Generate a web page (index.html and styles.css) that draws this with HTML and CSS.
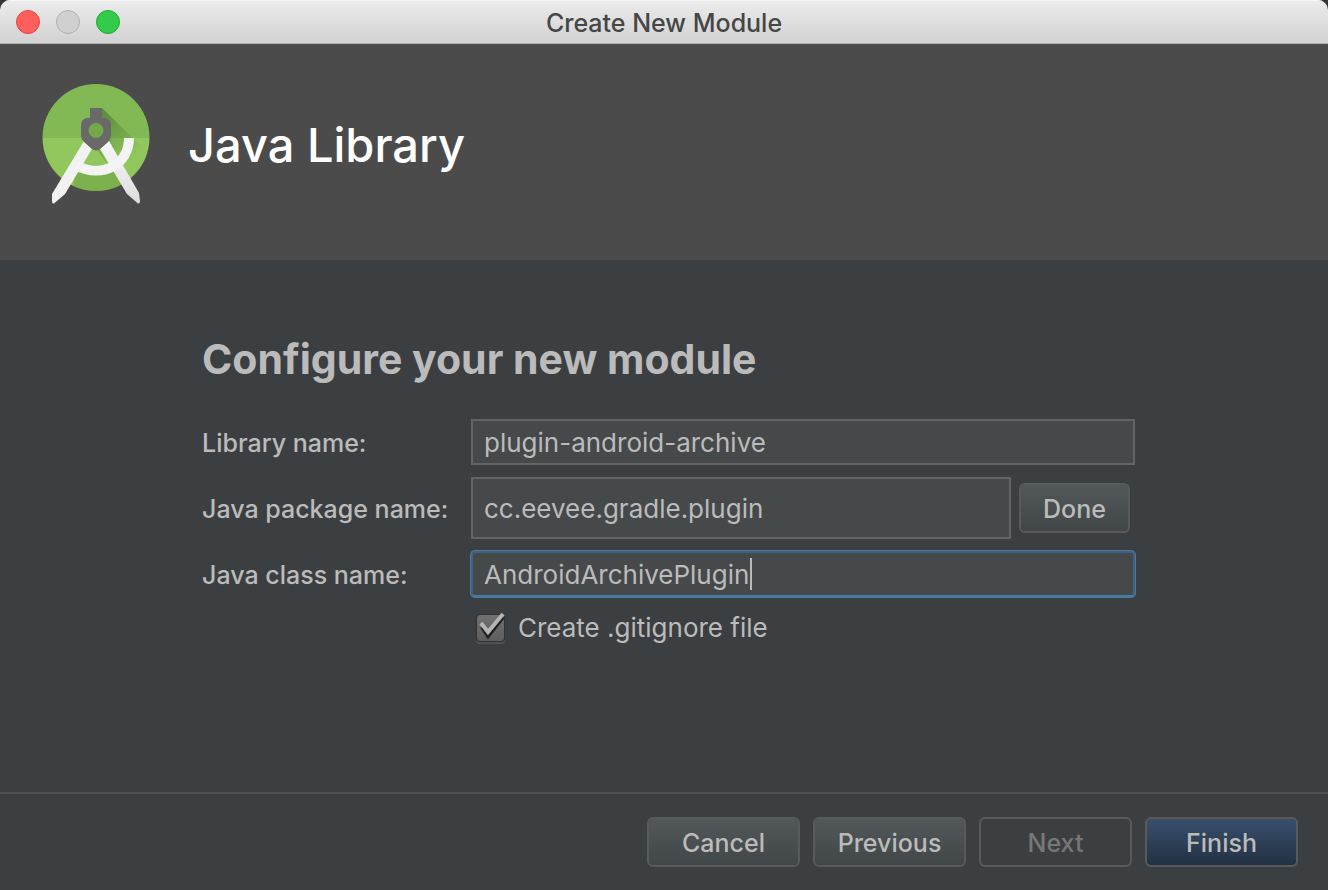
FILE: index.html
```html
<!DOCTYPE html>
<html lang="en">
<head>
<meta charset="utf-8">
<title>Create New Module</title>
<link rel="stylesheet" href="styles.css">
</head>
<body>
<div class="window">
  <header class="titlebar">
    <div class="lights">
      <button class="light close" type="button" aria-label="Close"></button>
      <button class="light minimize" type="button" aria-label="Minimize" disabled></button>
      <button class="light zoom" type="button" aria-label="Zoom"></button>
    </div>
    <div class="title">Create New Module</div>
  </header>

  <section class="banner">
    <svg class="logo" viewBox="0 0 140 150" aria-hidden="true">
      <defs>
        <clipPath id="disc"><circle cx="66" cy="67.500" r="53.500"/></clipPath>
        <linearGradient id="shade" gradientUnits="userSpaceOnUse" x1="72" y1="48" x2="108" y2="84">
          <stop offset="0" stop-color="#507c31" stop-opacity=".7"/>
          <stop offset="1" stop-color="#5d8f38" stop-opacity="0"/>
        </linearGradient>
        <linearGradient id="leg" x1="0" y1="0" x2="0" y2="1">
          <stop offset="0" stop-color="#f7f7f7"/>
          <stop offset="1" stop-color="#dedede"/>
        </linearGradient>
      </defs>
      <g clip-path="url(#disc)">
        <rect x="12" y="13" width="108" height="55" fill="#82b954"/>
        <rect x="12" y="68" width="108" height="54" fill="#92c75d"/>
        <path d="M72 38L126 91V128H100L66 78Z" fill="url(#shade)"/>
        <path d="M49 92Q66 98 86 94L103 122H42L46 100Z" fill="#5f9139" opacity=".4"/>
      </g>
      <path d="M54 71L62 79 35 124 24 133.500Q22 134 22 131V124Z" fill="#f2f2f2"/>
      <path d="M70 79L79 71 109 123 110 131Q110 134 108 133.500L97 124Z" fill="url(#leg)"/>
      <path d="M46 95.500C73 109 99 94 99 68" fill="none" stroke="#f4f4f4" stroke-width="10"/>
      <circle cx="66" cy="60.500" r="9" fill="#75a84b"/>
      <path fill="#696969" fill-rule="evenodd" d="M60 38H72V48H75Q81 49 81 55V65Q81 69 78 72L70 79Q66 82 62 79L54 72Q51 69 51 65V55Q51 49 57 48H60ZM66 53A7.500 7.500 0 1 0 66 68A7.500 7.500 0 1 0 66 53Z"/>
    </svg>
    <h1 class="banner-title">Java Library</h1>
  </section>

  <main class="content">
    <h2 class="heading">Configure your new module</h2>
    <form class="form" id="module-form">
      <label for="library">Library name:</label>
      <input class="field" id="library" type="text" value="plugin-android-archive">

      <label for="package">Java package name:</label>
      <div class="package">
        <input class="field tall" id="package" type="text" value="cc.eevee.gradle.plugin">
        <button class="button done" type="button">Done</button>
      </div>

      <label for="class">Java class name:</label>
      <div class="editing">
        <input class="field active" id="class" type="text" value="AndroidArchivePlugin">
        <span class="caret"></span>
      </div>

      <label class="check">
        <span class="box">
          <input type="checkbox" checked>
          <svg class="tick" viewBox="0 0 36 36" aria-hidden="true">
            <path d="M10 17L16 26 31 7" fill="none" stroke="#202020" stroke-width="4"/>
            <path d="M9 13L16 22 31 4" fill="none" stroke="#b5b5b5" stroke-width="4"/>
          </svg>
        </span>
        Create .gitignore file
      </label>
    </form>
  </main>

  <footer class="actions">
    <button class="button" type="button">Cancel</button>
    <button class="button" type="button">Previous</button>
    <button class="button" type="button" disabled>Next</button>
    <button class="button primary" type="submit" form="module-form">Finish</button>
  </footer>
</div>
</body>
</html>
```
FILE: styles.css
```css
* { box-sizing: border-box; }

body {
  margin: 0;
  background: #393432;
  color: #bbbbbb;
  font: 500 25px/32px Inter, "Liberation Sans", sans-serif;
}

.window {
  display: flex;
  flex-direction: column;
  min-height: 100vh;
  overflow: hidden;
  border-radius: 10px 10px 0 0;
  background: #3c3f41;
}

.titlebar {
  display: grid;
  grid-template-columns: 1fr auto 1fr;
  align-items: center;
  height: 44px;
  padding: 1px 16px 0;
  border-bottom: 1px solid #b0b0b0;
  background: linear-gradient(#ececec, #d2d2d2);
  box-shadow: inset 0 1px #f6f6f6;
  color: #464646;
}

.title { padding-top: 2px; font-weight: 500; }

.lights { display: flex; gap: 16px; }

.light {
  width: 24px;
  height: 24px;
  padding: 0;
  border: 1px solid;
  border-radius: 50%;
}

.close { background: #ff605b; border-color: #e2453f; }
.minimize { background: #d0d0d0; border-color: #b0b0b0; }
.zoom { background: #33cb49; border-color: #1dac2e; }

.banner {
  display: flex;
  align-items: center;
  gap: 18px;
  height: 216px;
  padding: 0 30px 14px;
  background: #4b4b4b;
  color: #ffffff;
}

.logo { width: 140px; height: 150px; }

.banner-title {
  margin: 0;
  font-size: 47px;
  font-weight: 500;
  line-height: 56px;
}

.content { flex: 1; padding: 75px 193px 0 202px; }

.heading {
  margin: 0 0 36px;
  font-size: 41px;
  font-weight: 700;
  line-height: 48px;
}

.form {
  display: grid;
  grid-template-columns: 269px 1fr;
  align-items: center;
  row-gap: 12px;
}

.form > label { padding-top: 2px; }

.field {
  width: 100%;
  min-width: 0;
  height: 46px;
  padding: 0 11px;
  border: 2px solid #646464;
  outline: none;
  background: #45494a;
  color: #bbbbbb;
  font: inherit;
  font-size: 26px;
  font-weight: 400;
}

.tall { height: 62px; }

.active {
  display: block;
  border: 2px solid #43607c;
  border-bottom-color: #4a78a5;
  border-radius: 4px;
  box-shadow: 0 0 0 1px #4a78a5;
}

.editing { position: relative; }

.caret {
  position: absolute;
  top: 7px;
  left: 279px;
  width: 2px;
  height: 32px;
  background: #bbbbbb;
}

.package { display: flex; align-items: center; gap: 8px; padding-right: 5px; }

.button {
  width: 153px;
  height: 50px;
  padding: 2px 0 0;
  border: 2px solid #585a5b;
  border-radius: 6px;
  background: linear-gradient(#525759, #414648) padding-box;
  color: #bbbbbb;
  font: inherit;
}

.button:disabled { background: none; color: #777777; }
.primary { background: linear-gradient(#384f6b, #233143) padding-box; }
.done { flex: none; width: 111px; }

.form > .check {
  grid-column: 2;
  display: flex;
  align-items: center;
  gap: 10px;
  padding: 1px 0 0 1px;
  font-size: 26px;
  font-weight: 400;
}

.box { position: relative; width: 36px; height: 36px; padding: 4px; }

.box input {
  appearance: none;
  display: block;
  width: 29px;
  height: 28px;
  margin: 0;
  border: 1px solid #2f3132;
  border-radius: 4px;
  background: linear-gradient(#707070, #5e5e5e);
  box-shadow: 0 2px #505354;
}

.tick { position: absolute; inset: 0; pointer-events: none; }

.actions {
  display: flex;
  justify-content: flex-end;
  gap: 13px;
  height: 98px;
  padding: 23px 30px 0;
  border-top: 2px solid #515151;
}
```
